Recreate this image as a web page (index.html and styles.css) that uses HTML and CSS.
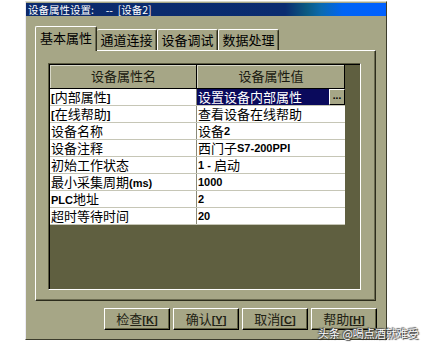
FILE: index.html
```html
<!DOCTYPE html>
<html>
<head>
<meta charset="utf-8">
<link rel="stylesheet" href="styles.css">
</head>
<body>
<div class="dialog">
  <div class="titlebar">设备属性设置:&nbsp;&nbsp;&nbsp;&nbsp;&nbsp;--&nbsp;&nbsp;[设备2]</div>
  <div class="tabs">
    <div class="tab active">基本属性</div>
    <div class="tab t2">通道连接</div>
    <div class="tab t3">设备调试</div>
    <div class="tab t4">数据处理</div>
  </div>
  <div class="panel">
    <div class="grid">
      <div class="table">
        <div class="row head"><div class="c1">设备属性名</div><div class="c2">设备属性值</div></div>
        <div class="row"><div class="c1"><span class="b">[</span>内部属性<span class="b">]</span></div><div class="c2 sel"><span>设置设备内部属性</span><span class="more">...</span></div></div>
        <div class="row"><div class="c1"><span class="b">[</span>在线帮助<span class="b">]</span></div><div class="c2">查看设备在线帮助</div></div>
        <div class="row"><div class="c1">设备名称</div><div class="c2">设备<span class="b">2</span></div></div>
        <div class="row"><div class="c1">设备注释</div><div class="c2">西门子<span class="b">S7-200PPI</span></div></div>
        <div class="row"><div class="c1">初始工作状态</div><div class="c2"><span class="b">1&nbsp;-&nbsp;</span>启动</div></div>
        <div class="row"><div class="c1">最小采集周期<span class="b">(ms)</span></div><div class="c2"><span class="b">1000</span></div></div>
        <div class="row"><div class="c1"><span class="b">PLC</span>地址</div><div class="c2"><span class="b">2</span></div></div>
        <div class="row"><div class="c1">超时等待时间</div><div class="c2"><span class="b">20</span></div></div>
      </div>
    </div>
  </div>
  <div class="buttons">
    <div class="btn">检查<span class="b">[<u>K</u>]</span></div>
    <div class="btn">确认<span class="b">[<u>Y</u>]</span></div>
    <div class="btn">取消<span class="b">[<u>C</u>]</span></div>
    <div class="btn">帮助<span class="b">[<u>H</u>]</span></div>
  </div>
</div>
<div class="watermark">头条 @喝点酒就难受</div>
</body>
</html>
```
FILE: styles.css
```css
html, body {
  margin: 0;
  padding: 0;
  background: #ffffff;
}
body {
  font-family: "Noto Sans CJK SC", "Liberation Sans", sans-serif;
  font-size: 13px;
  color: #000;
  position: relative;
  width: 429px;
  height: 348px;
  overflow: hidden;
}
.dialog {
  margin: 1px 0 0 25px;
  width: 362px;
  height: 339px;
  box-sizing: border-box;
  background: #a6a686;
  border-top: 1px solid #d8d8c8;
  border-left: 1px solid #ecebf4;
  border-right: 1px solid #3c3c2c;
  border-bottom: 1px solid #3c3c2c;
  display: flex;
  flex-direction: column;
}
.titlebar {
  margin-top: 1px;
  height: 13px;
  line-height: 13px;
  font-size: 10.5px;
  color: #fff;
  padding-left: 2px;
  white-space: nowrap;
  background: linear-gradient(to right, #0c2a6c 0%, #0a2c70 72%, #0a5a82 78%, #0a6ab0 82%, #0064f4 88%, #0060ff 100%);
}
.tabs {
  display: flex;
  align-items: flex-start;
  margin-top: 10px;
  padding-left: 9px;
  height: 24px;
  position: relative;
  z-index: 2;
}
.tab {
  box-sizing: border-box;
  border-top: 1px solid #fff;
  border-left: 1px solid #fff;
  border-right: 1px solid #2c2c1c;
  border-top-left-radius: 2px;
  border-top-right-radius: 2px;
  box-shadow: inset -1px 0 0 #6a6a50;
  margin-top: 3px;
  height: 21px;
  line-height: 19px;
  text-align: center;
  font-size: 13px;
  background: #a6a686;
}
.tab.active {
  margin-top: 0;
  height: 25px;
  width: 62px;
  line-height: 22px;
}
.t2 { width: 60px; border-left: none; }
.t3 { width: 61px; }
.t4 { width: 61px; }
.panel {
  margin-left: 9px;
  width: 341px;
  height: 251px;
  box-sizing: border-box;
  border-top: 1px solid #fff;
  border-left: 1px solid #fff;
  border-right: 1px solid #2c2c1c;
  border-bottom: 1px solid #2c2c1c;
  box-shadow: inset -1px -1px 0 #6a6a50;
  padding: 12px 0 0 12px;
}
.grid {
  width: 313px;
  height: 227px;
  box-sizing: border-box;
  background: #5f5f40;
  border-top: 1px solid #5a5a40;
  border-left: 1px solid #5a5a40;
  border-right: 1px solid #ffffff;
  border-bottom: 1px solid #ffffff;
  box-shadow: inset 1px 1px 0 #000;
  padding: 1px 0 0 1px;
}
.table {
  width: 295px;
}
.row {
  display: flex;
  height: 17px;
  box-sizing: border-box;
  border-bottom: 1px solid #c6c6b6;
  background: #fff;
  line-height: 16px;
  white-space: nowrap;
}
.row .c1 {
  width: 147px;
  box-sizing: border-box;
  border-right: 1px solid #8a8a78;
  padding-left: 1px;
}
.row .c2 {
  width: 148px;
  box-sizing: border-box;
  padding-left: 1px;
  display: flex;
}
.row.head {
  height: 24px;
  background: #a6a686;
  border-bottom: 1px solid #000;
  line-height: 22px;
}
.row.head .c1, .row.head .c2 {
  text-align: center;
  justify-content: center;
  border-right: 1px solid #000;
  box-shadow: inset 1px 1px 0 #d8d8c8;
  color: #1a1a10;
}
.row.head .c2 { width: 148px; }
.c2.sel {
  background: #0a0a5c;
  color: #fff;
  justify-content: space-between;
  padding-right: 0;
}
.more {
  width: 16px;
  height: 16px;
  box-sizing: border-box;
  background: #a6a686;
  color: #000;
  border-top: 1px solid #fff;
  border-left: 1px solid #fff;
  border-right: 1px solid #000;
  border-bottom: 1px solid #000;
  font-family: "Liberation Sans", sans-serif;
  font-weight: bold;
  font-size: 10px;
  line-height: 12px;
  text-align: center;
}
.b {
  font-family: "Liberation Sans", sans-serif;
  font-weight: bold;
  font-size: 11px;
}
.buttons {
  display: flex;
  justify-content: flex-end;
  gap: 3px;
  margin-top: 7px;
  padding-right: 9px;
}
.btn {
  width: 66px;
  height: 22px;
  box-sizing: border-box;
  border-top: 1px solid #fff;
  border-left: 1px solid #fff;
  border-right: 1px solid #000;
  border-bottom: 1px solid #000;
  box-shadow: inset -1px -1px 0 #5f5f40;
  text-align: center;
  line-height: 19px;
  font-size: 13px;
  color: #222214;
}
.watermark {
  position: absolute;
  left: 318px;
  top: 326px;
  font-size: 11px;
  line-height: 14px;
  color: #fff;
  white-space: nowrap;
  text-shadow: 0 0 1px #333, 1px 1px 1px #333, -1px -1px 1px #555;
}
```
